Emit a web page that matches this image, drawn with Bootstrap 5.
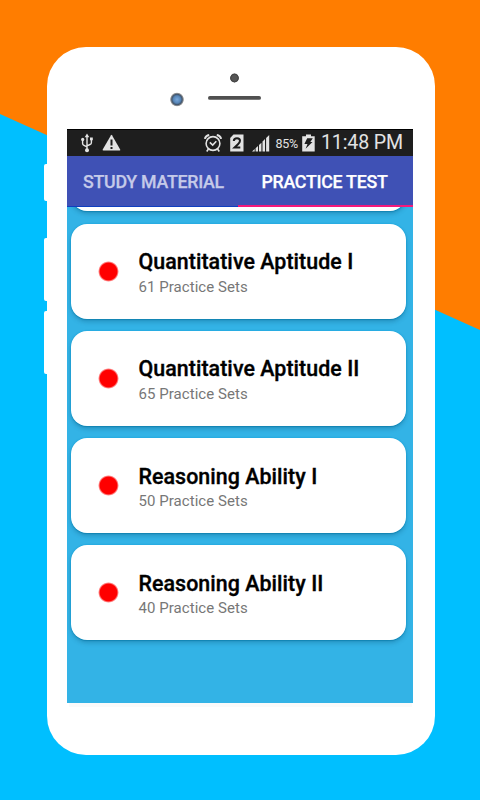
<!DOCTYPE html>
<html lang="en">
<head>
<meta charset="utf-8">
<meta name="viewport" content="width=device-width, initial-scale=1">
<title>Practice Test</title>
<link href="https://cdn.jsdelivr.net/npm/bootstrap@5.3.0/dist/css/bootstrap.min.css" rel="stylesheet">
<style>
body{width:480px;height:800px;overflow:hidden;font-family:Roboto,"Liberation Sans",sans-serif;background:#ff7d00}
.stage{width:480px;height:800px;padding:47px 0 0 47px}
.backdrop{left:0;top:0;z-index:0}
.phone{width:387.5px;height:707.5px;border-radius:39px;background:#fff;z-index:1}
.side-key{left:-3.5px;width:5px;background:#fff;border-radius:2px 0 0 2px}
.key-a{top:117px;height:37px}.key-b{top:191px;height:63px}.key-c{top:264px;height:63px}
.screen{width:345.5px;height:574px;margin-left:20px;background:#33b3e6}
.status{height:27.5px;background:#1e1e1e;border-top:1.5px solid #000;color:#e3e3e3;padding-left:13.5px;z-index:3}
.status svg{display:block;flex:none}
.ic-warn{margin-left:8.5px}.ic-alarm{margin-left:83px}.ic-sim{margin-left:8px}.ic-signal{margin-left:7.5px}
.pct{font-size:12.5px;line-height:24px;width:23px;margin:2px 3px 0 6px;white-space:nowrap;letter-spacing:-.3px}
.clock{font-size:19.6px;line-height:26px;margin-left:6.5px;white-space:nowrap;letter-spacing:-.15px}
.tabs{height:51px;background:#3f51b5;border-bottom:1px solid #0f3fc0;font-size:17.8px;font-weight:500;z-index:2}
.tabs .nav-link{color:#c5cae9;padding:0;line-height:51px;height:51px;white-space:nowrap;letter-spacing:-.28px;-webkit-text-stroke:.25px currentColor}
.tabs .t1{width:171px;height:50px;padding-left:16px}
.tabs .t2{width:174.5px;padding-left:23.5px;color:#fff;border-bottom:2px solid #f5197c}
.sets{padding:0 6.5px 0 4px}
.set-card{height:95px;margin-bottom:12.2px;border:0;border-radius:16px;background:#fff;box-shadow:0 0 1.5px #009ed8,0 1px 1px rgba(0,90,130,.4),0 3px 4px rgba(0,60,90,.25);padding-left:27px}
.set-card.cut{margin-top:-91px;margin-bottom:12.8px}
.bullet{width:21px;height:21px;border-radius:50%;background:radial-gradient(circle closest-side,#f00 80%,rgba(255,0,0,0));margin-right:20px;margin-left:-.5px}
.set-title{font-size:21.4px;line-height:26px;font-weight:500;color:#000;white-space:nowrap;margin-top:3.6px;letter-spacing:.05px;-webkit-text-stroke:.35px #000}
.set-sub{font-size:15px;line-height:20px;color:#777;white-space:nowrap;margin-top:1.6px;letter-spacing:.05px}
.foot{height:4px;margin-left:22px;background:#fafafa;width:343px}
</style>
<script src="https://cdn.jsdelivr.net/npm/bootstrap@5.3.0/dist/js/bootstrap.bundle.min.js"></script>
</head>
<body>
<svg class="backdrop position-absolute" width="480" height="800"><path d="M0 114L480 330V800H0Z" fill="#00bfff"/></svg>
<main class="stage">
 <div class="phone position-relative">
  <span class="side-key key-a position-absolute"></span><span class="side-key key-b position-absolute"></span><span class="side-key key-c position-absolute"></span>
  <svg class="d-block" width="387" height="81.5" viewBox="0 0 387 81.5">
   <defs><radialGradient id="lens"><stop offset="0" stop-color="#79a9dc"/><stop offset=".5" stop-color="#5685b7"/><stop offset=".72" stop-color="#40546c"/><stop offset=".88" stop-color="#999"/><stop offset="1" stop-color="#fff"/></radialGradient></defs>
   <circle cx="187.500" cy="31" r="4.400" fill="#555"/><circle cx="187.500" cy="31" r="3.800" fill="none" stroke="#444"/>
   <circle cx="130" cy="52.500" r="7.200" fill="url(#lens)"/>
   <rect x="161" y="49" width="53" height="3.800" rx="1.900" fill="#505050"/>
  </svg>
  <section class="screen d-flex flex-column overflow-hidden">
   <div class="status d-flex align-items-center flex-shrink-0 position-relative">
    <svg width="12" height="20" viewBox="0 0 12 20" fill="none" stroke="#e3e3e3" stroke-width="1.4"><path d="M6 3V17M1.6 7V10.5Q1.6 11.7 3 12.3L6 13.8M10.4 6V9.7Q10.4 11 9 11.5L6 12.8"/><path d="M6 .5L8.3 4.3H3.7ZM9 4.5h2.8v2.8H9Z" fill="#e3e3e3" stroke="none"/><circle cx="1.7" cy="6.4" r="1.6" fill="#e3e3e3" stroke="none"/><circle cx="6" cy="17.2" r="2" fill="#e3e3e3" stroke="none"/></svg>
    <svg class="ic-warn" width="20" height="18" viewBox="-1 0 20 18"><path d="M10 1.2Q9.500 .5 9 1.2L.7 15.600Q.4 16.500 1.300 16.500H17.700Q18.600 16.500 18.200 15.600Z" fill="#e3e3e3"/><path d="M9.500 5.500V11.500M9.500 13V15" stroke="#1e1e1e" stroke-width="2"/></svg>
    <svg class="ic-alarm" width="18" height="20" viewBox="0 0 18 20" fill="none" stroke="#e3e3e3" stroke-width="1.600"><circle cx="9" cy="10.500" r="6.900"/><path d="M5.800 9.300L8.700 12L12.300 8.200M4.500 16L2.700 18.400M13.500 16L15.300 18.400"/><path d="M.9 5.800Q1.500 2.600 5.200 2M17.100 5.800Q16.500 2.600 12.800 2" stroke-width="2"/></svg>
    <svg class="ic-sim" width="14" height="18" viewBox="0 0 14 18"><path d="M3.500 .5H13.500V17.500H.2V4Z" fill="#e3e3e3"/><path d="M3.800 7Q3.900 4.300 7 4.300Q10 4.300 10 6.800Q10 8.300 8 10.200L4.500 13.600H10.300" fill="none" stroke="#1e1e1e" stroke-width="2"/></svg>
    <svg class="ic-signal" width="18" height="18" viewBox="0 0 18 18" fill="#e3e3e3"><path d="M0 17.500L2.700 15V17.500ZM3.600 14.300L6 12V17.500H3.600ZM7 11L9.400 8.700V17.500H7ZM10.500 7.500L13 5V17.500H10.500ZM14.100 4L17.200 1V17.500H14.100Z"/></svg>
    <span class="pct">85%</span>
    <svg width="13" height="18" viewBox="0 0 13 18"><path d="M4 .5H9V2.300H12.700V17.500H.2V2.300H4Z" fill="#e3e3e3"/><path d="M5.200 4.300H10.800L8.300 8H10.500L3.600 14.800L5.500 10H2.400Z" fill="#1e1e1e"/></svg>
    <span class="clock">11:48 PM</span>
   </div>
   <nav class="tabs nav flex-nowrap flex-shrink-0 position-relative">
    <a class="nav-link t1" href="#">STUDY MATERIAL</a><a class="nav-link t2" href="#">PRACTICE TEST</a>
   </nav>
   <div class="sets flex-grow-1">
    <div class="card set-card cut"></div>
    <div class="card set-card flex-row align-items-center"><span class="bullet"></span><div><div class="set-title">Quantitative Aptitude I</div><div class="set-sub">61 Practice Sets</div></div></div>
    <div class="card set-card flex-row align-items-center"><span class="bullet"></span><div><div class="set-title">Quantitative Aptitude II</div><div class="set-sub">65 Practice Sets</div></div></div>
    <div class="card set-card flex-row align-items-center"><span class="bullet"></span><div><div class="set-title">Reasoning Ability I</div><div class="set-sub">50 Practice Sets</div></div></div>
    <div class="card set-card flex-row align-items-center"><span class="bullet"></span><div><div class="set-title">Reasoning Ability II</div><div class="set-sub">40 Practice Sets</div></div></div>
   </div>
  </section>
  <div class="foot"></div>
 </div>
</main>
</body>
</html>
